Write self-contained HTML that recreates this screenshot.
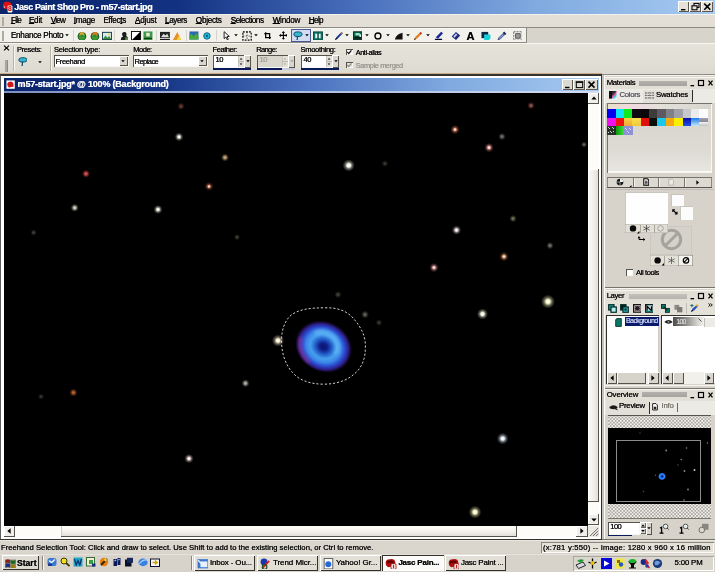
<!DOCTYPE html>
<html lang="en">
<head>
<meta charset="utf-8">
<title>Jasc Paint Shop Pro - m57-start.jpg</title>
<style>
html,body{margin:0;padding:0;}
body{width:715px;height:572px;overflow:hidden;background:#d9d6ce;font-family:"Liberation Sans",sans-serif;}
#app{position:relative;width:715px;height:572px;overflow:hidden;will-change:transform;transform:translateZ(0);}
#app div,#app span.t,#app svg{position:absolute;box-sizing:border-box;}
#app span.t{white-space:nowrap;display:block;-webkit-text-stroke:0.15px currentColor;}
#app u{text-decoration-thickness:0.8px;text-underline-offset:0.2px;}
</style>
</head>
<body>
<div id="app">
<div style="left:0px;top:0px;width:715px;height:13.6px;background:linear-gradient(90deg,#0a246a 0%,#133282 25%,#486fbc 50%,#80aae0 75%,#a6caf0 100%);"></div>
<svg style="left:2px;top:1px" width="12" height="12" viewBox="0 0 12 12"><path d="M1 4.5 Q1 1 4.5 0.8 Q9 0.2 9.6 3.6 L9.6 7 L3 8 Q1 7.4 1 4.5Z" fill="#e01010"/><circle cx="2.4" cy="6" r="0.8" fill="#f8d0e0"/><rect x="5.6" y="4.6" width="4.8" height="6.8" rx="1" fill="#fff"/></svg>
<span class="t" style="left:8.1px;top:4.63px;font-size:6.72px;line-height:8.74px;height:8.74px;color:#d02828;font-weight:bold;text-shadow:0 0 0.5px rgba(208,40,40,0.5);">8</span>
<span class="t" style="left:14.3px;top:1.73px;font-size:9.03px;line-height:11.74px;height:11.74px;color:#fff;font-weight:bold;text-shadow:0 0 0.5px rgba(255,255,255,0.5);letter-spacing:-0.395px;">Jasc Paint Shop Pro - m57-start.jpg</span>
<div style="left:678px;top:1px;width:10.8px;height:11px;background:#e6e2da;box-shadow:inset 1px 1px 0 #ffffff, inset -1px -1px 0 #5a5850;"></div>
<div style="left:689.2px;top:1px;width:11.6px;height:11px;background:#e6e2da;box-shadow:inset 1px 1px 0 #ffffff, inset -1px -1px 0 #5a5850;"></div>
<div style="left:701.3px;top:1px;width:11.8px;height:11px;background:#e6e2da;box-shadow:inset 1px 1px 0 #ffffff, inset -1px -1px 0 #5a5850;"></div>
<svg style="left:678px;top:1px" width="36" height="11" viewBox="0 0 36 11"><rect x="3" y="8" width="4.4" height="1.4" fill="#000"/><rect x="16" y="2.4" width="5" height="4" fill="none" stroke="#000" stroke-width="1.1"/><rect x="14" y="4.8" width="5" height="4" fill="#e6e2da" stroke="#000" stroke-width="1.1"/><path d="M26.3 2.6 L32.3 8.8 M32.3 2.6 L26.3 8.8" stroke="#000" stroke-width="1.6"/></svg>
<div style="left:0px;top:13.6px;width:715px;height:14.4px;background:#e3dfd7;"></div>
<div style="left:0px;top:13.6px;width:715px;height:1.2px;background:#f4f2ec;"></div>
<div style="left:0px;top:27px;width:715px;height:1px;background:#8e8b84;"></div>
<div style="left:1.5px;top:16.5px;width:2px;height:9.5px;background:#aeaba3;"></div>
<span class="t" style="left:10.9px;top:15.98px;font-size:8.19px;line-height:10.65px;height:10.65px;color:#000;text-shadow:0 0 0.5px rgba(0,0,0,0.5);letter-spacing:-0.772px;"><u>F</u>ile</span>
<span class="t" style="left:28.9px;top:15.98px;font-size:8.19px;line-height:10.65px;height:10.65px;color:#000;text-shadow:0 0 0.5px rgba(0,0,0,0.5);letter-spacing:-0.248px;"><u>E</u>dit</span>
<span class="t" style="left:50.8px;top:15.98px;font-size:8.19px;line-height:10.65px;height:10.65px;color:#000;text-shadow:0 0 0.5px rgba(0,0,0,0.5);letter-spacing:-0.845px;"><u>V</u>iew</span>
<span class="t" style="left:73.8px;top:15.98px;font-size:8.19px;line-height:10.65px;height:10.65px;color:#000;text-shadow:0 0 0.5px rgba(0,0,0,0.5);letter-spacing:-0.307px;"><u>I</u>mage</span>
<span class="t" style="left:103.5px;top:15.98px;font-size:8.19px;line-height:10.65px;height:10.65px;color:#000;text-shadow:0 0 0.5px rgba(0,0,0,0.5);letter-spacing:-0.337px;">Effec<u>t</u>s</span>
<span class="t" style="left:135px;top:15.98px;font-size:8.19px;line-height:10.65px;height:10.65px;color:#000;text-shadow:0 0 0.5px rgba(0,0,0,0.5);letter-spacing:-0.186px;"><u>A</u>djust</span>
<span class="t" style="left:165px;top:15.98px;font-size:8.19px;line-height:10.65px;height:10.65px;color:#000;text-shadow:0 0 0.5px rgba(0,0,0,0.5);letter-spacing:-0.422px;"><u>L</u>ayers</span>
<span class="t" style="left:195.8px;top:15.98px;font-size:8.19px;line-height:10.65px;height:10.65px;color:#000;text-shadow:0 0 0.5px rgba(0,0,0,0.5);letter-spacing:-0.288px;"><u>O</u>bjects</span>
<span class="t" style="left:230.7px;top:15.98px;font-size:8.19px;line-height:10.65px;height:10.65px;color:#000;text-shadow:0 0 0.5px rgba(0,0,0,0.5);letter-spacing:-0.492px;"><u>S</u>elections</span>
<span class="t" style="left:272.7px;top:15.98px;font-size:8.19px;line-height:10.65px;height:10.65px;color:#000;text-shadow:0 0 0.5px rgba(0,0,0,0.5);letter-spacing:-0.296px;"><u>W</u>indow</span>
<span class="t" style="left:308.8px;top:15.98px;font-size:8.19px;line-height:10.65px;height:10.65px;color:#000;text-shadow:0 0 0.5px rgba(0,0,0,0.5);letter-spacing:-0.653px;"><u>H</u>elp</span>
<div style="left:0px;top:28px;width:715px;height:15px;background:#d7d4cc;"></div>
<div style="left:0px;top:28px;width:526px;height:15px;background:#f3f1ec;"></div>
<div style="left:0px;top:28px;width:527px;height:1px;background:#f8f6f0;"></div>
<div style="left:0px;top:42px;width:527px;height:1px;background:#8e8b84;"></div>
<div style="left:527px;top:42.5px;width:188px;height:1px;background:#fbfaf6;"></div>
<div style="left:525.5px;top:28px;width:1px;height:15px;background:#8e8b84;"></div>
<div style="left:1.5px;top:31px;width:2px;height:9.5px;background:#aeaba3;"></div>
<span class="t" style="left:10.9px;top:30.68px;font-size:8.19px;line-height:10.65px;height:10.65px;color:#000;text-shadow:0 0 0.5px rgba(0,0,0,0.5);letter-spacing:-0.261px;">Enhance Photo</span>
<svg style="left:65px;top:34.199999999999996px" width="4" height="2.4" viewBox="0 0 5 3"><path d="M0.3 0.2 L4.7 0.2 L2.5 2.8Z" fill="#000"/></svg>
<div style="left:72.5px;top:30px;width:1px;height:11px;background:#d6d3cc;"></div>
<div style="left:114px;top:30px;width:1px;height:11px;background:#d6d3cc;"></div>
<div style="left:155.5px;top:30px;width:1px;height:11px;background:#d6d3cc;"></div>
<div style="left:185.5px;top:30px;width:1px;height:11px;background:#d6d3cc;"></div>
<div style="left:215.5px;top:30px;width:1px;height:11px;background:#d6d3cc;"></div>
<svg style="left:77.05px;top:30.55px" width="9.9" height="9.9" viewBox="0 0 11 11"><circle cx="5.5" cy="6" r="4.8" fill="#1c5c1c"/><circle cx="5.5" cy="6.4" r="3.6" fill="#3a9a34"/><ellipse cx="5.5" cy="3.6" rx="2.6" ry="2.4" fill="#e8a838"/><ellipse cx="5.5" cy="5.2" rx="2" ry="1.4" fill="#2e8a2e"/></svg>
<svg style="left:90.05px;top:30.55px" width="9.9" height="9.9" viewBox="0 0 11 11"><circle cx="5.5" cy="6" r="4.8" fill="#1c5c1c"/><circle cx="5.5" cy="6.4" r="3.6" fill="#3a9a34"/><ellipse cx="5.5" cy="3.6" rx="2.8" ry="2.5" fill="#e87828"/><ellipse cx="5.5" cy="5.4" rx="2" ry="1.4" fill="#2e8a2e"/></svg>
<svg style="left:102.05px;top:30.55px" width="9.9" height="9.9" viewBox="0 0 11 11"><rect x="0.5" y="1.5" width="10" height="8" fill="#d8ecf0" stroke="#1a3c44" stroke-width="1.1"/><path d="M1 9 L4 5 L6 7.5 L8 5.5 L10 9Z" fill="#3a8a3a"/><circle cx="7.5" cy="3.8" r="1.1" fill="#e8d850"/></svg>
<svg style="left:119.05px;top:30.55px" width="9.9" height="9.9" viewBox="0 0 11 11"><path d="M2 10.5 Q2 6.5 4.5 6 Q3 4.5 3.5 2.5 Q5 0.3 7.5 1.5 Q9 3 8 5.5 L10 7 L10 10.5Z" fill="#1c1c1c"/><rect x="7" y="7" width="3" height="3.5" fill="#5a8a4a"/></svg>
<svg style="left:131.05px;top:30.55px" width="9.9" height="9.9" viewBox="0 0 11 11"><rect x="0.5" y="0.5" width="10" height="10" fill="#fff" stroke="#000" stroke-width="1"/><path d="M0.5 10.5 L10.5 0.5 L10.5 10.5Z" fill="#000"/></svg>
<svg style="left:143.05px;top:30.55px" width="9.9" height="9.9" viewBox="0 0 11 11"><rect x="0.5" y="0.5" width="10" height="10" fill="#3a9a4a"/><rect x="3.5" y="2" width="4" height="4" fill="#e8e8d0"/><rect x="1" y="7.5" width="9" height="1.5" fill="#1a3a1a"/></svg>
<svg style="left:160.05px;top:30.55px" width="9.9" height="9.9" viewBox="0 0 11 11"><rect x="0" y="1" width="11" height="7" fill="#222"/><path d="M1 7 L4 3 L6 5 L8 3 L10 7Z" fill="#ddd"/><rect x="0" y="9" width="11" height="1.5" fill="#000"/></svg>
<svg style="left:172.05px;top:30.55px" width="9.9" height="9.9" viewBox="0 0 11 11"><path d="M1 10 L6 1 L10 10Z" fill="#e89020"/><path d="M5 10 L8 5 L10.5 10Z" fill="#f0d840"/><path d="M0.5 10.5 L10.5 10.5" stroke="#6a8ad0" stroke-width="1"/></svg>
<svg style="left:189.05px;top:30.55px" width="9.9" height="9.9" viewBox="0 0 11 11"><rect x="0.5" y="0.5" width="10" height="9" fill="#2a6ab0"/><path d="M0.5 9.5 L0.5 5 L3 3 L5 6 L8 2.5 L10.5 5.5 L10.5 9.5Z" fill="#4aa840"/></svg>
<svg style="left:202.05px;top:31.05px" width="9.9" height="9.9" viewBox="0 0 11 11"><circle cx="5.5" cy="5.5" r="3.6" fill="#20b8d8" stroke="#0a5a7a" stroke-width="1"/><circle cx="5.5" cy="5.5" r="1.2" fill="#0a5a7a"/></svg>
<svg style="left:222.12px;top:31.12px" width="9.35" height="9.35" viewBox="0 0 11 11"><path d="M2.5 0.8 L2.5 9 L4.6 7 L6.2 10.4 L7.4 9.8 L5.9 6.6 L8.6 6.4Z" fill="#fff" stroke="#000" stroke-width="1"/></svg>
<svg style="left:233.5px;top:34.199999999999996px" width="4" height="2.4" viewBox="0 0 5 3"><path d="M0.3 0.2 L4.7 0.2 L2.5 2.8Z" fill="#000"/></svg>
<svg style="left:241.74px;top:30.94px" width="10.12" height="10.12" viewBox="0 0 11 11"><rect x="1" y="1" width="9" height="9" fill="none" stroke="#000" stroke-width="1.3" stroke-dasharray="2 1.3"/><path d="M5.5 1 V10" stroke="#000" stroke-width="0.8" stroke-dasharray="1.5 1.5"/><path d="M1 5.5 H10" stroke="#000" stroke-width="0.6" stroke-dasharray="1.5 1.5"/></svg>
<svg style="left:253.5px;top:34.199999999999996px" width="4" height="2.4" viewBox="0 0 5 3"><path d="M0.3 0.2 L4.7 0.2 L2.5 2.8Z" fill="#000"/></svg>
<svg style="left:264.17px;top:32.07px" width="7.26" height="7.26" viewBox="0 0 11 11"><path d="M2.5 0.5 V8.5 H10.5 M0.5 2.5 H8.5 V10.5" fill="none" stroke="#000" stroke-width="1.9"/></svg>
<svg style="left:278.6px;top:31.3px" width="8.8" height="8.8" viewBox="0 0 11 11"><path d="M5.5 0 L7.5 2.4 H6.2 V4.8 H8.6 V3.5 L11 5.5 L8.6 7.5 V6.2 H6.2 V8.6 H7.5 L5.5 11 L3.5 8.6 H4.8 V6.2 H2.4 V7.5 L0 5.5 L2.4 3.5 V4.8 H4.8 V2.4 H3.5Z" fill="#000"/></svg>
<div style="left:291px;top:29px;width:19.8px;height:12.6px;background:#d3dcf0;border:1px solid #4a5a98;"></div>
<svg style="left:293.05px;top:30.55px" width="9.9" height="9.9" viewBox="0 0 11 11"><ellipse cx="5.5" cy="3.6" rx="4.6" ry="2.6" fill="#38b8d0" stroke="#0a4a6a" stroke-width="1.1"/><path d="M4.5 6 Q5.5 8 4.2 10.5" fill="none" stroke="#0a4a6a" stroke-width="1.3"/></svg>
<svg style="left:305px;top:34.199999999999996px" width="4" height="2.4" viewBox="0 0 5 3"><path d="M0.3 0.2 L4.7 0.2 L2.5 2.8Z" fill="#000"/></svg>
<svg style="left:313.25px;top:30.55px" width="9.9" height="9.9" viewBox="0 0 11 11"><rect x="0.5" y="1" width="10" height="9" fill="#0a7a6c" stroke="#04443c" stroke-width="1"/><rect x="2.5" y="3" width="6" height="5" fill="#e8f4f0"/><rect x="4.8" y="2" width="1.6" height="7" fill="#04443c"/></svg>
<svg style="left:324.8px;top:34.199999999999996px" width="4" height="2.4" viewBox="0 0 5 3"><path d="M0.3 0.2 L4.7 0.2 L2.5 2.8Z" fill="#000"/></svg>
<svg style="left:333.55px;top:30.55px" width="9.9" height="9.9" viewBox="0 0 11 11"><path d="M1 10 L3 6.5 L8.5 1 L10 2.5 L4.5 8Z" fill="#1a3a9a"/><path d="M1 10 L2.4 7.4 L3.8 8.8Z" fill="#000"/><path d="M7.2 2.3 L8.5 1 L10 2.5 L8.7 3.8Z" fill="#e07828"/></svg>
<svg style="left:345px;top:34.199999999999996px" width="4" height="2.4" viewBox="0 0 5 3"><path d="M0.3 0.2 L4.7 0.2 L2.5 2.8Z" fill="#000"/></svg>
<svg style="left:353.18px;top:31.08px" width="9.24" height="9.24" viewBox="0 0 11 11"><rect x="0.5" y="1" width="10" height="9" fill="#087a5c" stroke="#04241c" stroke-width="1.2"/><rect x="3" y="2.5" width="5" height="2.6" fill="#a8e8c8"/><rect x="1.5" y="6.6" width="8" height="2.6" fill="#021410"/><rect x="7.6" y="4" width="2" height="3" fill="#e8f4f0"/></svg>
<svg style="left:365px;top:34.199999999999996px" width="4" height="2.4" viewBox="0 0 5 3"><path d="M0.3 0.2 L4.7 0.2 L2.5 2.8Z" fill="#000"/></svg>
<svg style="left:373.05px;top:30.55px" width="9.9" height="9.9" viewBox="0 0 11 11"><circle cx="5.5" cy="5.5" r="3.3" fill="none" stroke="#000" stroke-width="1.5"/></svg>
<svg style="left:385.5px;top:34.199999999999996px" width="4" height="2.4" viewBox="0 0 5 3"><path d="M0.3 0.2 L4.7 0.2 L2.5 2.8Z" fill="#000"/></svg>
<svg style="left:394.05px;top:30.55px" width="9.9" height="9.9" viewBox="0 0 11 11"><path d="M1 9.5 Q2 4 9.5 2 L9.5 9.5Z" fill="#111"/></svg>
<svg style="left:405.5px;top:34.199999999999996px" width="4" height="2.4" viewBox="0 0 5 3"><path d="M0.3 0.2 L4.7 0.2 L2.5 2.8Z" fill="#000"/></svg>
<svg style="left:413.05px;top:30.55px" width="9.9" height="9.9" viewBox="0 0 11 11"><path d="M1 10 L3 6 L8.5 1 L10 2.5 L5 8Z" fill="#e08020"/><path d="M1 10 L2 7.8 L3.4 9.2Z" fill="#402000"/><path d="M7 2.5 L8.5 1 L10 2.5 L8.6 4Z" fill="#c03030"/></svg>
<svg style="left:425.5px;top:34.199999999999996px" width="4" height="2.4" viewBox="0 0 5 3"><path d="M0.3 0.2 L4.7 0.2 L2.5 2.8Z" fill="#000"/></svg>
<svg style="left:433.55px;top:30.55px" width="9.9" height="9.9" viewBox="0 0 11 11"><path d="M2 7 L8 0.8 L10 2.6 L4.5 8.5Z" fill="#1a2a9a"/><rect x="1" y="8.6" width="8" height="1.8" fill="#0a0a3a"/></svg>
<svg style="left:451.35px;top:30.55px" width="9.9" height="9.9" viewBox="0 0 11 11"><path d="M0.8 6 L5.5 1 L10.2 5 L5.6 10Z" fill="#1a2a7a"/><path d="M2.5 6 L5.5 2.8 L7 4.2 L4 7.4Z" fill="#c8d0f0"/></svg>
<span class="t" style="left:466.6px;top:28.66px;font-size:11.13px;line-height:14.47px;height:14.47px;color:#000;font-weight:bold;text-shadow:0 0 0.5px rgba(0,0,0,0.5);">A</span>
<svg style="left:481.05px;top:30.55px" width="9.9" height="9.9" viewBox="0 0 11 11"><rect x="0.5" y="1" width="7.5" height="7" fill="#0a2a4a"/><path d="M3.5 4 H10.5 V8 L8.5 10.5 H3.5Z" fill="#18d0d8"/></svg>
<svg style="left:497.05px;top:30.55px" width="9.9" height="9.9" viewBox="0 0 11 11"><path d="M1 10 L2 7.5 L6.5 3 L8 4.5 L3.5 9Z" fill="#7a9ad8" stroke="#1a2a5a" stroke-width="0.7"/><path d="M6.3 2.2 L8 0.6 L10.4 3 L8.8 4.7Z" fill="#1a2a5a"/></svg>
<svg style="left:512.55px;top:30.55px" width="9.9" height="9.9" viewBox="0 0 11 11"><rect x="0.8" y="0.8" width="9.4" height="9.4" fill="none" stroke="#555" stroke-width="0.9" stroke-dasharray="2.2 1"/><rect x="3" y="3" width="5" height="5" fill="#999" stroke="#333" stroke-width="0.8"/></svg>
<div style="left:0px;top:43px;width:715px;height:31px;background:#e4e1d9;background:linear-gradient(180deg,#e6e3db 0%,#e1ded6 60%,#dcd9d1 100%);"></div>
<div style="left:0px;top:43px;width:715px;height:1px;background:#f8f6f0;"></div>
<div style="left:0px;top:72.7px;width:602px;height:1px;background:#c9ab8c;"></div>
<div style="left:0px;top:73.7px;width:602px;height:2px;background:#36322e;"></div>
<div style="left:602px;top:73.7px;width:113px;height:1px;background:#8e8b84;"></div>
<div style="left:602px;top:74.7px;width:113px;height:1px;background:#f4f2ec;"></div>
<div style="left:0px;top:75.7px;width:602px;height:1px;background:#f8f6f2;"></div>
<svg style="left:3px;top:44.5px" width="7" height="6" viewBox="0 0 7 6"><path d="M1 0.6 L6 5.4 M6 0.6 L1 5.4" stroke="#000" stroke-width="1.2"/></svg>
<div style="left:4px;top:59.5px;width:4.2px;height:12.5px;background:#aba8a0;box-shadow:inset 1px 0 0 #d8d5cd,inset -1px 0 0 #8d8a82;"></div>
<div style="left:13px;top:46px;width:1px;height:25px;background:#b5b2aa;"></div>
<div style="left:14px;top:46px;width:1px;height:25px;background:#f8f6f0;"></div>
<div style="left:50px;top:46px;width:1px;height:25px;background:#b5b2aa;"></div>
<div style="left:51px;top:46px;width:1px;height:25px;background:#f8f6f0;"></div>
<span class="t" style="left:17px;top:44.69px;font-size:7.56px;line-height:9.83px;height:9.83px;color:#000;text-shadow:0 0 0.5px rgba(0,0,0,0.5);letter-spacing:-0.398px;">Presets:</span>
<svg style="left:17.55px;top:56.55px" width="9.9" height="9.9" viewBox="0 0 11 11"><ellipse cx="5.5" cy="3.2" rx="4.6" ry="2.4" fill="#38b8d0" stroke="#0a4a6a" stroke-width="1.1"/><path d="M4.5 5.4 Q5.5 7.5 4.2 10.5" fill="none" stroke="#0a4a6a" stroke-width="1.3"/></svg>
<svg style="left:37.5px;top:60.8px" width="4" height="2.4" viewBox="0 0 5 3"><path d="M0.3 0.2 L4.7 0.2 L2.5 2.8Z" fill="#000"/></svg>
<span class="t" style="left:54px;top:44.69px;font-size:7.56px;line-height:9.83px;height:9.83px;color:#000;text-shadow:0 0 0.5px rgba(0,0,0,0.5);letter-spacing:-0.234px;">Selection type:</span>
<span class="t" style="left:133.2px;top:44.69px;font-size:7.56px;line-height:9.83px;height:9.83px;color:#000;text-shadow:0 0 0.5px rgba(0,0,0,0.5);letter-spacing:-0.497px;">Mode:</span>
<span class="t" style="left:212.5px;top:44.69px;font-size:7.56px;line-height:9.83px;height:9.83px;color:#000;text-shadow:0 0 0.5px rgba(0,0,0,0.5);letter-spacing:-0.451px;">Feather:</span>
<span class="t" style="left:256.2px;top:44.69px;font-size:7.56px;line-height:9.83px;height:9.83px;color:#000;text-shadow:0 0 0.5px rgba(0,0,0,0.5);letter-spacing:-0.641px;">Range:</span>
<span class="t" style="left:300.5px;top:44.69px;font-size:7.56px;line-height:9.83px;height:9.83px;color:#000;text-shadow:0 0 0.5px rgba(0,0,0,0.5);letter-spacing:-0.319px;">Smoothing:</span>
<div style="left:54px;top:55px;width:75px;height:12px;background:#fff;box-shadow:inset 1px 1px 0 #55534c, inset -1px -1px 0 #f8f6f0;"></div>
<div style="left:118.5px;top:56px;width:9.5px;height:10px;background:#d9d6ce;box-shadow:inset 1px 1px 0 #fff, inset -1px -1px 0 #55534c;"></div>
<svg style="left:121.2px;top:60.099999999999994px" width="4" height="2.4" viewBox="0 0 5 3"><path d="M0.3 0.2 L4.7 0.2 L2.5 2.8Z" fill="#000"/></svg>
<span class="t" style="left:55.6px;top:56.88px;font-size:7.56px;line-height:9.83px;height:9.83px;color:#000;text-shadow:0 0 0.5px rgba(0,0,0,0.5);letter-spacing:-0.377px;">Freehand</span>
<div style="left:133px;top:55px;width:75px;height:12px;background:#fff;box-shadow:inset 1px 1px 0 #55534c, inset -1px -1px 0 #f8f6f0;"></div>
<div style="left:197.5px;top:56px;width:9.5px;height:10px;background:#d9d6ce;box-shadow:inset 1px 1px 0 #fff, inset -1px -1px 0 #55534c;"></div>
<svg style="left:200.2px;top:60.099999999999994px" width="4" height="2.4" viewBox="0 0 5 3"><path d="M0.3 0.2 L4.7 0.2 L2.5 2.8Z" fill="#000"/></svg>
<span class="t" style="left:134.6px;top:56.88px;font-size:7.56px;line-height:9.83px;height:9.83px;color:#000;text-shadow:0 0 0.5px rgba(0,0,0,0.5);letter-spacing:-0.586px;">Replace</span>
<div style="left:213px;top:54.5px;width:31px;height:13px;background:#fff;box-shadow:inset 1px 1px 0 #55534c, inset -1px -1px 0 #f8f6f0;"></div>
<span class="t" style="left:215.5px;top:55.09px;font-size:7.56px;line-height:9.83px;height:9.83px;color:#000;text-shadow:0 0 0.5px rgba(0,0,0,0.5);letter-spacing:-0.403px;">10</span>
<div style="left:237.5px;top:55.5px;width:6px;height:11px;background:#e4e1d9;box-shadow:inset 1px 0 0 #c8c5be;"></div>
<div style="left:237.5px;top:61.0px;width:6px;height:1px;background:#b8b5ae;"></div>
<svg style="left:238.7px;top:56.7px" width="4" height="9" viewBox="0 0 4 9"><path d="M0.6 2.6 L3.4 2.6 L2 1Z M0.6 6.4 L3.4 6.4 L2 8Z" fill="#000"/></svg>
<div style="left:244px;top:54.5px;width:7px;height:13px;background:#d9d6ce;box-shadow:inset 1px 1px 0 #fff, inset -1px -1px 0 #55534c;"></div>
<svg style="left:245.6px;top:60.099999999999994px" width="4" height="2.4" viewBox="0 0 5 3"><path d="M0.3 0.2 L4.7 0.2 L2.5 2.8Z" fill="#000"/></svg>
<div style="left:213px;top:67.5px;width:38px;height:2px;background:#0a1a5a;"></div>
<div style="left:257px;top:54.5px;width:31px;height:13px;background:#d9d6ce;box-shadow:inset 1px 1px 0 #55534c, inset -1px -1px 0 #f8f6f0;"></div>
<span class="t" style="left:259.5px;top:55.09px;font-size:7.56px;line-height:9.83px;height:9.83px;color:#a5a29a;text-shadow:0 0 0.5px rgba(165,162,154,0.5);letter-spacing:-0.403px;">10</span>
<div style="left:281.5px;top:55.5px;width:6px;height:11px;background:#e4e1d9;box-shadow:inset 1px 0 0 #c8c5be;"></div>
<div style="left:281.5px;top:61.0px;width:6px;height:1px;background:#b8b5ae;"></div>
<svg style="left:282.7px;top:56.7px" width="4" height="9" viewBox="0 0 4 9"><path d="M0.6 2.6 L3.4 2.6 L2 1Z M0.6 6.4 L3.4 6.4 L2 8Z" fill="#a5a29a"/></svg>
<div style="left:288px;top:54.5px;width:7px;height:13px;background:#d9d6ce;box-shadow:inset 1px 1px 0 #fff, inset -1px -1px 0 #55534c;"></div>
<svg style="left:289.6px;top:60.099999999999994px" width="4" height="2.4" viewBox="0 0 5 3"><path d="M0.3 0.2 L4.7 0.2 L2.5 2.8Z" fill="#a5a29a"/></svg>
<div style="left:257px;top:67.5px;width:25px;height:2px;background:#0a1a5a;"></div>
<div style="left:282px;top:67.5px;width:13px;height:2px;background:#c8ccd8;"></div>
<div style="left:301px;top:54.5px;width:31px;height:13px;background:#fff;box-shadow:inset 1px 1px 0 #55534c, inset -1px -1px 0 #f8f6f0;"></div>
<span class="t" style="left:303.5px;top:55.09px;font-size:7.56px;line-height:9.83px;height:9.83px;color:#000;text-shadow:0 0 0.5px rgba(0,0,0,0.5);letter-spacing:-0.403px;">40</span>
<div style="left:325.5px;top:55.5px;width:6px;height:11px;background:#e4e1d9;box-shadow:inset 1px 0 0 #c8c5be;"></div>
<div style="left:325.5px;top:61.0px;width:6px;height:1px;background:#b8b5ae;"></div>
<svg style="left:326.7px;top:56.7px" width="4" height="9" viewBox="0 0 4 9"><path d="M0.6 2.6 L3.4 2.6 L2 1Z M0.6 6.4 L3.4 6.4 L2 8Z" fill="#000"/></svg>
<div style="left:332px;top:54.5px;width:7px;height:13px;background:#d9d6ce;box-shadow:inset 1px 1px 0 #fff, inset -1px -1px 0 #55534c;"></div>
<svg style="left:333.6px;top:60.099999999999994px" width="4" height="2.4" viewBox="0 0 5 3"><path d="M0.3 0.2 L4.7 0.2 L2.5 2.8Z" fill="#000"/></svg>
<div style="left:301px;top:67.5px;width:38px;height:2px;background:#0a1a5a;"></div>
<div style="left:346px;top:48.5px;width:6.5px;height:6.5px;background:#fff;box-shadow:inset 1px 1px 0 #55534c, inset -1px -1px 0 #f8f6f0;"></div>
<svg style="left:346px;top:48.5px" width="6.5" height="6.5" viewBox="0 0 7 7"><path d="M1.4 3.2 L3 5 L5.8 1.6" fill="none" stroke="#000" stroke-width="1.3"/></svg>
<div style="left:346px;top:61.5px;width:6.5px;height:6.5px;background:#e4e1d9;box-shadow:inset 1px 1px 0 #55534c, inset -1px -1px 0 #f8f6f0;"></div>
<svg style="left:346px;top:61.5px" width="6.5" height="6.5" viewBox="0 0 7 7"><path d="M1.4 3.2 L3 5 L5.8 1.6" fill="none" stroke="#8a877f" stroke-width="1.3"/></svg>
<span class="t" style="left:355.8px;top:47.52px;font-size:7.35px;line-height:9.55px;height:9.55px;color:#000;text-shadow:0 0 0.5px rgba(0,0,0,0.5);letter-spacing:-0.472px;">Anti-alias</span>
<span class="t" style="left:355.8px;top:60.52px;font-size:7.35px;line-height:9.55px;height:9.55px;color:#9a978f;text-shadow:0 0 0.5px rgba(154,151,143,0.5);letter-spacing:-0.373px;">Sample merged</span>
<div style="left:0px;top:76px;width:715px;height:464px;background:#d6d1c9;"></div>
<div style="left:0px;top:75.7px;width:601px;height:463.6px;background:#ffffff;"></div>
<div style="left:0px;top:75px;width:1px;height:465px;background:#5e5e5e;"></div>
<div style="left:601px;top:75px;width:1px;height:465px;background:#33312c;"></div>
<div style="left:602px;top:75px;width:2px;height:465px;background:#c4c1ba;"></div>
<div style="left:604px;top:75px;width:1px;height:465px;background:#fbfaf6;"></div>
<div style="left:3.5px;top:78px;width:595.5px;height:12.6px;background:linear-gradient(90deg,#0a246a 0%,#133282 25%,#486fbc 50%,#80aae0 75%,#a6caf0 100%);"></div>
<div style="left:3.5px;top:90.5px;width:595.5px;height:2.3px;background:linear-gradient(90deg,#7f8fc0 0%,#a9b6dc 40%,#d4dcf2 100%);"></div>
<svg style="left:6px;top:80.3px" width="9.2" height="9.2" viewBox="0 0 11 11"><rect x="0.5" y="0.5" width="10" height="10" fill="#fff"/><path d="M1.5 5.5 Q1.5 2 5 2 Q8.5 1.5 9 5 L9 8 L3.5 9 Q1.5 8 1.5 5.5Z" fill="#d01818"/></svg>
<span class="t" style="left:17.6px;top:79.33px;font-size:9.03px;line-height:11.74px;height:11.74px;color:#fff;font-weight:bold;text-shadow:0 0 0.5px rgba(255,255,255,0.5);letter-spacing:-0.209px;">m57-start.jpg* @ 100% (Background)</span>
<div style="left:561.8px;top:79px;width:11px;height:11px;background:#dcd9d1;box-shadow:inset 1px 1px 0 #ffffff, inset -1px -1px 0 #5a5850;"></div>
<div style="left:573.3px;top:79px;width:11.5px;height:11px;background:#dcd9d1;box-shadow:inset 1px 1px 0 #ffffff, inset -1px -1px 0 #5a5850;"></div>
<div style="left:585.3px;top:79px;width:12.5px;height:11px;background:#dcd9d1;box-shadow:inset 1px 1px 0 #ffffff, inset -1px -1px 0 #5a5850;"></div>
<svg style="left:561.8px;top:79px" width="36" height="11" viewBox="0 0 36 11"><rect x="3" y="7.8" width="4.5" height="1.4" fill="#000"/><rect x="14.3" y="3" width="6.4" height="5.6" fill="none" stroke="#000" stroke-width="1"/><rect x="13.8" y="2.4" width="7.4" height="1.4" fill="#000"/><path d="M26.5 2.6 L32.5 8.6 M32.5 2.6 L26.5 8.6" stroke="#000" stroke-width="1.5"/></svg>
<div style="left:3.8px;top:92.7px;width:583.8px;height:432.9px;background:#000;"></div>
<svg style="left:0;top:0" width="715" height="572" viewBox="0 0 715 572"><defs><filter id="bl" x="-50%" y="-50%" width="200%" height="200%"><feGaussianBlur stdDeviation="1.6"/></filter><radialGradient id="neb" cx="0.5" cy="0.52" r="0.5"><stop offset="0" stop-color="#0a1270"/><stop offset="0.14" stop-color="#10208c"/><stop offset="0.3" stop-color="#2462cc"/><stop offset="0.46" stop-color="#46a0ee"/><stop offset="0.6" stop-color="#3c88e8"/><stop offset="0.74" stop-color="#2a4cd0"/><stop offset="0.87" stop-color="#3424a0" stop-opacity="0.85"/><stop offset="1" stop-color="#300c50" stop-opacity="0"/></radialGradient><radialGradient id="s0"><stop offset="0" stop-color="#38382f"/><stop offset="0.3" stop-color="#38382f" stop-opacity="0.9"/><stop offset="0.6" stop-color="#38382f" stop-opacity="0.35"/><stop offset="1" stop-color="#38382f" stop-opacity="0"/></radialGradient><radialGradient id="s1"><stop offset="0" stop-color="#383830"/><stop offset="0.3" stop-color="#383830" stop-opacity="0.9"/><stop offset="0.6" stop-color="#383830" stop-opacity="0.35"/><stop offset="1" stop-color="#383830" stop-opacity="0"/></radialGradient><radialGradient id="s2"><stop offset="0" stop-color="#404038"/><stop offset="0.3" stop-color="#404038" stop-opacity="0.9"/><stop offset="0.6" stop-color="#404038" stop-opacity="0.35"/><stop offset="1" stop-color="#404038" stop-opacity="0"/></radialGradient><radialGradient id="s3"><stop offset="0" stop-color="#40403a"/><stop offset="0.3" stop-color="#40403a" stop-opacity="0.9"/><stop offset="0.6" stop-color="#40403a" stop-opacity="0.35"/><stop offset="1" stop-color="#40403a" stop-opacity="0"/></radialGradient><radialGradient id="s4"><stop offset="0" stop-color="#606058"/><stop offset="0.3" stop-color="#606058" stop-opacity="0.9"/><stop offset="0.6" stop-color="#606058" stop-opacity="0.35"/><stop offset="1" stop-color="#606058" stop-opacity="0"/></radialGradient><radialGradient id="s5"><stop offset="0" stop-color="#6a3a34"/><stop offset="0.3" stop-color="#6a3a34" stop-opacity="0.9"/><stop offset="0.6" stop-color="#6a3a34" stop-opacity="0.35"/><stop offset="1" stop-color="#6a3a34" stop-opacity="0"/></radialGradient><radialGradient id="s6"><stop offset="0" stop-color="#707058"/><stop offset="0.3" stop-color="#707058" stop-opacity="0.9"/><stop offset="0.6" stop-color="#707058" stop-opacity="0.35"/><stop offset="1" stop-color="#707058" stop-opacity="0"/></radialGradient><radialGradient id="s7"><stop offset="0" stop-color="#707068"/><stop offset="0.3" stop-color="#707068" stop-opacity="0.9"/><stop offset="0.6" stop-color="#707068" stop-opacity="0.35"/><stop offset="1" stop-color="#707068" stop-opacity="0"/></radialGradient><radialGradient id="s8"><stop offset="0" stop-color="#905048"/><stop offset="0.3" stop-color="#905048" stop-opacity="0.9"/><stop offset="0.6" stop-color="#905048" stop-opacity="0.35"/><stop offset="1" stop-color="#905048" stop-opacity="0"/></radialGradient><radialGradient id="s9"><stop offset="0" stop-color="#b0b0a8"/><stop offset="0.3" stop-color="#b0b0a8" stop-opacity="0.9"/><stop offset="0.6" stop-color="#b0b0a8" stop-opacity="0.35"/><stop offset="1" stop-color="#b0b0a8" stop-opacity="0"/></radialGradient><radialGradient id="s10"><stop offset="0" stop-color="#c06030"/><stop offset="0.3" stop-color="#c06030" stop-opacity="0.9"/><stop offset="0.6" stop-color="#c06030" stop-opacity="0.35"/><stop offset="1" stop-color="#c06030" stop-opacity="0"/></radialGradient><radialGradient id="s11"><stop offset="0" stop-color="#c06040"/><stop offset="0.3" stop-color="#c06040" stop-opacity="0.9"/><stop offset="0.6" stop-color="#c06040" stop-opacity="0.35"/><stop offset="1" stop-color="#c06040" stop-opacity="0"/></radialGradient><radialGradient id="s12"><stop offset="0" stop-color="#c8a878"/><stop offset="0.3" stop-color="#c8a878" stop-opacity="0.9"/><stop offset="0.6" stop-color="#c8a878" stop-opacity="0.35"/><stop offset="1" stop-color="#c8a878" stop-opacity="0"/></radialGradient><radialGradient id="s13"><stop offset="0" stop-color="#d8d8c8"/><stop offset="0.3" stop-color="#d8d8c8" stop-opacity="0.9"/><stop offset="0.6" stop-color="#d8d8c8" stop-opacity="0.35"/><stop offset="1" stop-color="#d8d8c8" stop-opacity="0"/></radialGradient><radialGradient id="s14"><stop offset="0" stop-color="#e05050"/><stop offset="0.3" stop-color="#e05050" stop-opacity="0.9"/><stop offset="0.6" stop-color="#e05050" stop-opacity="0.35"/><stop offset="1" stop-color="#e05050" stop-opacity="0"/></radialGradient><radialGradient id="s15"><stop offset="0" stop-color="#e07850"/><stop offset="0.3" stop-color="#e07850" stop-opacity="0.9"/><stop offset="0.6" stop-color="#e07850" stop-opacity="0.35"/><stop offset="1" stop-color="#e07850" stop-opacity="0"/></radialGradient><radialGradient id="s16"><stop offset="0" stop-color="#e09060"/><stop offset="0.3" stop-color="#e09060" stop-opacity="0.9"/><stop offset="0.6" stop-color="#e09060" stop-opacity="0.35"/><stop offset="1" stop-color="#e09060" stop-opacity="0"/></radialGradient><radialGradient id="s17"><stop offset="0" stop-color="#e09090"/><stop offset="0.3" stop-color="#e09090" stop-opacity="0.9"/><stop offset="0.6" stop-color="#e09090" stop-opacity="0.35"/><stop offset="1" stop-color="#e09090" stop-opacity="0"/></radialGradient><radialGradient id="s18"><stop offset="0" stop-color="#e8e8dc"/><stop offset="0.3" stop-color="#e8e8dc" stop-opacity="0.9"/><stop offset="0.6" stop-color="#e8e8dc" stop-opacity="0.35"/><stop offset="1" stop-color="#e8e8dc" stop-opacity="0"/></radialGradient><radialGradient id="s19"><stop offset="0" stop-color="#e8f4ff"/><stop offset="0.3" stop-color="#e8f4ff" stop-opacity="0.9"/><stop offset="0.6" stop-color="#e8f4ff" stop-opacity="0.35"/><stop offset="1" stop-color="#e8f4ff" stop-opacity="0"/></radialGradient><radialGradient id="s20"><stop offset="0" stop-color="#f09090"/><stop offset="0.3" stop-color="#f09090" stop-opacity="0.9"/><stop offset="0.6" stop-color="#f09090" stop-opacity="0.35"/><stop offset="1" stop-color="#f09090" stop-opacity="0"/></radialGradient><radialGradient id="s21"><stop offset="0" stop-color="#f0d8d8"/><stop offset="0.3" stop-color="#f0d8d8" stop-opacity="0.9"/><stop offset="0.6" stop-color="#f0d8d8" stop-opacity="0.35"/><stop offset="1" stop-color="#f0d8d8" stop-opacity="0"/></radialGradient><radialGradient id="s22"><stop offset="0" stop-color="#f0e0e0"/><stop offset="0.3" stop-color="#f0e0e0" stop-opacity="0.9"/><stop offset="0.6" stop-color="#f0e0e0" stop-opacity="0.35"/><stop offset="1" stop-color="#f0e0e0" stop-opacity="0"/></radialGradient><radialGradient id="s23"><stop offset="0" stop-color="#f0f0e0"/><stop offset="0.3" stop-color="#f0f0e0" stop-opacity="0.9"/><stop offset="0.6" stop-color="#f0f0e0" stop-opacity="0.35"/><stop offset="1" stop-color="#f0f0e0" stop-opacity="0"/></radialGradient><radialGradient id="s24"><stop offset="0" stop-color="#fff0d0"/><stop offset="0.3" stop-color="#fff0d0" stop-opacity="0.9"/><stop offset="0.6" stop-color="#fff0d0" stop-opacity="0.35"/><stop offset="1" stop-color="#fff0d0" stop-opacity="0"/></radialGradient><radialGradient id="s25"><stop offset="0" stop-color="#ffffc0"/><stop offset="0.3" stop-color="#ffffc0" stop-opacity="0.9"/><stop offset="0.6" stop-color="#ffffc0" stop-opacity="0.35"/><stop offset="1" stop-color="#ffffc0" stop-opacity="0"/></radialGradient><radialGradient id="s26"><stop offset="0" stop-color="#ffffc8"/><stop offset="0.3" stop-color="#ffffc8" stop-opacity="0.9"/><stop offset="0.6" stop-color="#ffffc8" stop-opacity="0.35"/><stop offset="1" stop-color="#ffffc8" stop-opacity="0"/></radialGradient><radialGradient id="s27"><stop offset="0" stop-color="#ffffe8"/><stop offset="0.3" stop-color="#ffffe8" stop-opacity="0.9"/><stop offset="0.6" stop-color="#ffffe8" stop-opacity="0.35"/><stop offset="1" stop-color="#ffffe8" stop-opacity="0"/></radialGradient><radialGradient id="s28"><stop offset="0" stop-color="#ffffee"/><stop offset="0.3" stop-color="#ffffee" stop-opacity="0.9"/><stop offset="0.6" stop-color="#ffffee" stop-opacity="0.35"/><stop offset="1" stop-color="#ffffee" stop-opacity="0"/></radialGradient></defs><circle cx="181" cy="106.3" r="3.77" fill="url(#s5)"/><circle cx="179" cy="136.9" r="4.35" fill="url(#s18)"/><circle cx="179" cy="136.9" r="1.26" fill="#ffffff" fill-opacity="0.75"/><circle cx="225" cy="157.5" r="4.06" fill="url(#s12)"/><circle cx="86" cy="173.8" r="4.06" fill="url(#s14)"/><circle cx="209" cy="186.4" r="4.35" fill="url(#s11)"/><circle cx="209" cy="186.4" r="1.26" fill="#ffffff" fill-opacity="0.75"/><circle cx="74.7" cy="207.8" r="4.06" fill="url(#s13)"/><circle cx="158" cy="209.5" r="4.5" fill="url(#s23)"/><circle cx="158" cy="209.5" r="1.3" fill="#ffffff" fill-opacity="0.75"/><circle cx="33.6" cy="232.6" r="3.19" fill="url(#s3)"/><circle cx="237" cy="237.2" r="3.19" fill="url(#s2)"/><circle cx="531" cy="105.6" r="3.77" fill="url(#s8)"/><circle cx="455" cy="129.6" r="4.64" fill="url(#s15)"/><circle cx="455" cy="129.6" r="1.34" fill="#ffffff" fill-opacity="0.75"/><circle cx="502" cy="136.6" r="3.77" fill="url(#s7)"/><circle cx="489" cy="147.6" r="4.64" fill="url(#s20)"/><circle cx="489" cy="147.6" r="1.34" fill="#ffffff" fill-opacity="0.75"/><circle cx="584" cy="144.6" r="3.19" fill="url(#s4)"/><circle cx="348.7" cy="165.4" r="6.09" fill="url(#s28)"/><circle cx="348.7" cy="165.4" r="1.76" fill="#ffffff" fill-opacity="0.75"/><circle cx="385" cy="163.6" r="3.48" fill="url(#s1)"/><circle cx="513" cy="218.6" r="3.77" fill="url(#s6)"/><circle cx="456.5" cy="230.1" r="4.64" fill="url(#s22)"/><circle cx="456.5" cy="230.1" r="1.34" fill="#ffffff" fill-opacity="0.75"/><circle cx="550" cy="245.6" r="3.77" fill="url(#s7)"/><circle cx="504" cy="256.6" r="4.64" fill="url(#s16)"/><circle cx="504" cy="256.6" r="1.34" fill="#ffffff" fill-opacity="0.75"/><circle cx="434" cy="267.6" r="4.64" fill="url(#s17)"/><circle cx="434" cy="267.6" r="1.34" fill="#ffffff" fill-opacity="0.75"/><circle cx="548" cy="301.6" r="6.96" fill="url(#s26)"/><circle cx="548" cy="301.6" r="2.02" fill="#ffffff" fill-opacity="0.75"/><circle cx="338" cy="294.6" r="3.77" fill="url(#s2)"/><circle cx="278" cy="340.6" r="6.09" fill="url(#s24)"/><circle cx="278" cy="340.6" r="1.76" fill="#ffffff" fill-opacity="0.75"/><circle cx="245.5" cy="383.3" r="4.06" fill="url(#s9)"/><circle cx="73.4" cy="392.6" r="4.06" fill="url(#s10)"/><circle cx="41" cy="396.6" r="3.19" fill="url(#s1)"/><circle cx="189" cy="458.6" r="4.64" fill="url(#s21)"/><circle cx="189" cy="458.6" r="1.34" fill="#ffffff" fill-opacity="0.75"/><circle cx="482.5" cy="314.0" r="5.51" fill="url(#s27)"/><circle cx="482.5" cy="314.0" r="1.6" fill="#ffffff" fill-opacity="0.75"/><circle cx="365" cy="314.6" r="4.06" fill="url(#s4)"/><circle cx="379" cy="322.6" r="3.48" fill="url(#s0)"/><circle cx="502.7" cy="438.6" r="5.8" fill="url(#s19)"/><circle cx="502.7" cy="438.6" r="1.68" fill="#ffffff" fill-opacity="0.75"/><circle cx="475" cy="512.1" r="6.38" fill="url(#s25)"/><circle cx="475" cy="512.1" r="1.85" fill="#ffffff" fill-opacity="0.75"/><g transform="translate(324 345.8) rotate(28)"><ellipse cx="0" cy="0" rx="29.5" ry="25.5" fill="url(#neb)"/><path d="M-13 -8 A15 12.5 0 0 1 14 0" fill="none" stroke="#6ac0fa" stroke-opacity="0.6" stroke-width="5" stroke-linecap="round" filter="url(#bl)"/><path d="M-24 4 A24 21 0 0 0 -6 21" fill="none" stroke="#b03890" stroke-opacity="0.7" stroke-width="2.5" stroke-linecap="round" filter="url(#bl)"/></g><path d="M325 307.8 C338 307.5 347 311 353.5 318.5 C361 327 365.5 336 365.4 346 C365.5 357 363 365 357 371.5 C349 379.5 339 384 323.5 384.2 C309 384 299 380 292.5 372.5 C285 364 281.5 353 281.5 340 C281.8 330 284 323 289.5 316.5 C297 309.5 309 307.8 325 307.8Z" fill="none" stroke="#e4e4de" stroke-width="0.9" stroke-dasharray="2.2 1.9"/></svg>
<div style="left:587.6px;top:92.7px;width:11.4px;height:432.9px;background:#fdfcf9;"></div>
<div style="left:587.6px;top:92.8px;width:11.4px;height:11px;background:#f1efe9;box-shadow:inset -1px -1px 0 #55534c, inset 1px 1px 0 #fff;"></div>
<div style="left:587.6px;top:514.2px;width:11.4px;height:11px;background:#f1efe9;box-shadow:inset -1px -1px 0 #55534c, inset 1px 1px 0 #fff;"></div>
<svg style="left:590.5px;top:96.3px" width="6" height="4" viewBox="0 0 6 4"><path d="M0.3 3.6 L5.7 3.6 L3 0.4Z" fill="#000"/></svg>
<svg style="left:590.5px;top:518.2px" width="6" height="4" viewBox="0 0 6 4"><path d="M0.3 0.4 L5.7 0.4 L3 3.6Z" fill="#000"/></svg>
<div style="left:587.6px;top:169px;width:11.4px;height:333px;background:linear-gradient(90deg,#fbfaf6 0%,#efede7 55%,#dedbd4 100%);box-shadow:inset -1px -1px 0 #55534c, inset 1px 1px 0 #fff;"></div>
<div style="left:3.8px;top:525.6px;width:583.8px;height:11px;background:#fdfcf9;"></div>
<div style="left:3.8px;top:525.6px;width:11.4px;height:11px;background:#f1efe9;box-shadow:inset -1px -1px 0 #55534c, inset 1px 1px 0 #fff;"></div>
<div style="left:576.2px;top:525.6px;width:11.4px;height:11px;background:#f1efe9;box-shadow:inset -1px -1px 0 #55534c, inset 1px 1px 0 #fff;"></div>
<svg style="left:7.2px;top:528.2px" width="4" height="6" viewBox="0 0 4 6"><path d="M3.6 0.3 L3.6 5.7 L0.4 3Z" fill="#000"/></svg>
<svg style="left:580.2px;top:528.2px" width="4" height="6" viewBox="0 0 4 6"><path d="M0.4 0.3 L0.4 5.7 L3.6 3Z" fill="#000"/></svg>
<div style="left:61px;top:525.6px;width:455.5px;height:11px;background:linear-gradient(180deg,#fffffa 0%,#f3f1ea 50%,#dedbd5 100%);box-shadow:inset -1px -1px 0 #55534c, inset 1px 0 0 #d0cdc6;"></div>
<div style="left:587.6px;top:525.6px;width:11.4px;height:11px;background:#ebe9e3;"></div>
<svg style="left:588.5px;top:526px" width="10" height="10.5" viewBox="0 0 10 11"><path d="M1 10.5 L9.5 2 M4 10.5 L9.5 5 M7 10.5 L9.5 8" stroke="#55534c" stroke-width="0.9"/></svg>
<div style="left:1px;top:536.6px;width:598px;height:1px;background:#dcd9d2;"></div>
<div style="left:1px;top:537px;width:600px;height:2px;background:#ffffff;"></div>
<div style="left:0px;top:539px;width:602px;height:1px;background:#33312c;"></div>
<div style="left:605px;top:76px;width:110px;height:464px;background:#d7d2ca;"></div>
<div style="left:604.5px;top:78px;width:110.5px;height:11px;background:#e2dfd7;"></div>
<div style="left:604.5px;top:77px;width:110.5px;height:1px;background:#f8f6f0;"></div>
<span class="t" style="left:606.7px;top:78.25px;font-size:7.77px;line-height:10.1px;height:10.1px;color:#000;text-shadow:0 0 0.5px rgba(0,0,0,0.5);letter-spacing:-0.324px;">Materials</span>
<div style="left:639px;top:80.6px;width:47.5px;height:5.4px;background:#aaa8a2;background:linear-gradient(180deg,#b4b2ac,#a4a29c);"></div>
<svg style="left:689px;top:79px" width="25" height="9" viewBox="0 0 25 9"><rect x="1.5" y="6" width="3.6" height="1.3" fill="#000"/><rect x="9.5" y="1.5" width="5" height="5" fill="none" stroke="#000" stroke-width="1.2"/><path d="M19.5 1.6 L23.5 6.4 M23.5 1.6 L19.5 6.4" stroke="#000" stroke-width="1.3"/></svg>
<div style="left:604.5px;top:89px;width:110.5px;height:198px;background:#d7d2ca;"></div>
<div style="left:605px;top:89px;width:110px;height:13.5px;background:#eceae4;"></div>
<div style="left:643px;top:89.5px;width:49px;height:13px;background:#e2dfd8;"></div>
<div style="left:691.5px;top:90px;width:1px;height:11.5px;background:#2a2a2a;"></div>
<svg style="left:609px;top:91px" width="8" height="8" viewBox="0 0 8 8"><defs><linearGradient id="cg" x1="0" x2="1" y1="0" y2="1"><stop offset="0" stop-color="#000"/><stop offset="0.45" stop-color="#303030"/><stop offset="0.6" stop-color="#e040a0"/><stop offset="0.8" stop-color="#40e0e0"/><stop offset="1" stop-color="#fff"/></linearGradient></defs><rect width="7.5" height="7.5" fill="url(#cg)"/><rect width="3" height="7.5" fill="#101010"/></svg>
<span class="t" style="left:619.5px;top:89.75px;font-size:7.77px;line-height:10.1px;height:10.1px;color:#5a5464;text-shadow:0 0 0.5px rgba(90,84,100,0.5);letter-spacing:-0.326px;">Colors</span>
<svg style="left:645px;top:91.5px" width="9" height="7" viewBox="0 0 9 7"><path d="M0 1 H9 M0 3.5 H9 M0 6 H9" stroke="#6a6a6a" stroke-width="1" stroke-dasharray="1.5 1"/><path d="M1 0 V7 M4.5 0 V7 M8 0 V7" stroke="#6a6a6a" stroke-width="0.8" stroke-dasharray="1.5 1"/></svg>
<span class="t" style="left:656px;top:89.75px;font-size:7.77px;line-height:10.1px;height:10.1px;color:#000;text-shadow:0 0 0.5px rgba(0,0,0,0.5);letter-spacing:-0.209px;">Swatches</span>
<div style="left:606.5px;top:103px;width:105px;height:69.5px;background:#dcd9d3;background:linear-gradient(180deg,#e6e3dc 0%,#dad7d1 35%,#dedbd5 70%,#e9e7e1 100%);box-shadow:inset 1px 1px 0 #77746c, inset -1px -1px 0 #f8f6f0;"></div>
<div style="left:607.5px;top:104px;width:103px;height:5px;background:#e6e3da;background:linear-gradient(90deg,#e8e0c8,#f0d8e0 25%,#e4e1da 50%,#d8d5ce 100%);"></div>
<div style="left:607.3px;top:109.4px;width:8.5px;height:8.5px;background:#0000f0;"></div>
<div style="left:615.66px;top:109.4px;width:8.5px;height:8.5px;background:#10e0f8;"></div>
<div style="left:624.02px;top:109.4px;width:8.5px;height:8.5px;background:#10e820;"></div>
<div style="left:632.38px;top:109.4px;width:8.5px;height:8.5px;background:#100810;"></div>
<div style="left:640.74px;top:109.4px;width:8.5px;height:8.5px;background:#080808;"></div>
<div style="left:649.1px;top:109.4px;width:8.5px;height:8.5px;background:#3c3c3c;"></div>
<div style="left:657.46px;top:109.4px;width:8.5px;height:8.5px;background:#605860;"></div>
<div style="left:665.82px;top:109.4px;width:8.5px;height:8.5px;background:#808088;"></div>
<div style="left:674.18px;top:109.4px;width:8.5px;height:8.5px;background:#a0a0a8;"></div>
<div style="left:682.54px;top:109.4px;width:8.5px;height:8.5px;background:#c8c8cc;"></div>
<div style="left:690.9px;top:109.4px;width:8.5px;height:8.5px;background:#ececec;"></div>
<div style="left:699.26px;top:109.4px;width:8.5px;height:8.5px;background:#fcfcfc;"></div>
<div style="left:607.3px;top:117.8px;width:8.5px;height:8.5px;background:#f010f0;"></div>
<div style="left:615.66px;top:117.8px;width:8.5px;height:8.5px;background:#f01010;"></div>
<div style="left:624.02px;top:117.8px;width:8.5px;height:8.5px;background:linear-gradient(180deg,#f8d040,#f0a838);"></div>
<div style="left:632.38px;top:117.8px;width:8.5px;height:8.5px;background:linear-gradient(180deg,#f8e050,#f0c838);"></div>
<div style="left:640.74px;top:117.8px;width:8.5px;height:8.5px;background:#e01010;"></div>
<div style="left:649.1px;top:117.8px;width:8.5px;height:8.5px;background:#081008;"></div>
<div style="left:657.46px;top:117.8px;width:8.5px;height:8.5px;background:#18c8f0;"></div>
<div style="left:665.82px;top:117.8px;width:8.5px;height:8.5px;background:#f8a810;"></div>
<div style="left:674.18px;top:117.8px;width:8.5px;height:8.5px;background:#f8f000;"></div>
<div style="left:682.54px;top:117.8px;width:8.5px;height:8.5px;background:linear-gradient(180deg,#0810a0,#2050f0);"></div>
<div style="left:690.9px;top:117.8px;width:8.5px;height:8.5px;background:linear-gradient(180deg,#1878e8,#c8e8f8);"></div>
<div style="left:699.26px;top:117.8px;width:8.5px;height:8.5px;background:linear-gradient(180deg,#a8a0b0 0%,#88889a 45%,#f0f0f0 55%,#c0c0c0 100%);"></div>
<div style="left:607.3px;top:126.2px;width:8.5px;height:8.5px;background:#283028;"></div>
<div style="left:615.66px;top:126.2px;width:8.5px;height:8.5px;background:linear-gradient(90deg,#089808,#40e040);"></div>
<div style="left:624.02px;top:126.2px;width:8.5px;height:8.5px;background:#9090d8;"></div>
<svg style="left:607.3px;top:126.2px" width="8" height="8" viewBox="0 0 8 8"><path d="M1 1 L3 3 M5 1 L7 3 M3 5 L5 7 M1 6 L2 7 M6 5 L7 6" stroke="#e8f0e8" stroke-width="0.9"/></svg>
<svg style="left:624px;top:126.2px" width="8" height="8" viewBox="0 0 8 8"><path d="M1 2 L3 4 M5 2 L7 4 M3 5 L5 7" stroke="#e0e0ff" stroke-width="0.9"/></svg>
<div style="left:607.5px;top:171px;width:103px;height:1px;background:#fbfaf6;"></div>
<div style="left:606.5px;top:176.8px;width:105px;height:11px;background:#dcd9d1;box-shadow:inset 0 1px 0 #77746c, inset 0 -1px 0 #55534c, inset 1px 0 0 #8a877f, inset -1px 0 0 #8a877f;"></div>
<div style="left:632.5px;top:177.5px;width:1px;height:9.5px;background:#77746c;"></div>
<div style="left:633.5px;top:177.5px;width:1px;height:9.5px;background:#f4f2ec;"></div>
<div style="left:658px;top:177.5px;width:1px;height:9.5px;background:#77746c;"></div>
<div style="left:659px;top:177.5px;width:1px;height:9.5px;background:#f4f2ec;"></div>
<div style="left:683.5px;top:177.5px;width:1px;height:9.5px;background:#77746c;"></div>
<div style="left:684.5px;top:177.5px;width:1px;height:9.5px;background:#f4f2ec;"></div>
<svg style="left:616px;top:178.3px" width="8" height="8" viewBox="0 0 10 10"><circle cx="5" cy="5" r="4.2" fill="#151515"/><path d="M5 1 A4 4 0 0 1 9 5 L5 5Z" fill="#f0f0f0"/><path d="M1 5 H5 V9" fill="none" stroke="#ddd" stroke-width="0.8"/></svg>
<svg style="left:629px;top:184.5px" width="2.5" height="2.5" viewBox="0 0 3 3"><path d="M3 0 V3 H0Z" fill="#000"/></svg>
<svg style="left:642.5px;top:178.3px" width="6.4" height="8" viewBox="0 0 8 10"><path d="M1 0.8 H5.4 L7.2 2.6 V9.2 H1Z" fill="#fff" stroke="#000" stroke-width="1.3"/><path d="M2.4 4 H5.8 M2.4 5.8 H5.8 M2.4 7.4 H5.8" stroke="#000" stroke-width="1"/></svg>
<svg style="left:668px;top:178.3px" width="6.4" height="8" viewBox="0 0 8 10"><path d="M1 1.5 H5.4 L7 3 V9 H1Z" fill="#eceae4" stroke="#aeaba4" stroke-width="1"/></svg>
<svg style="left:696px;top:179.8px" width="3.4" height="5" viewBox="0 0 4 6"><path d="M0.4 0.3 L0.4 5.7 L3.6 3Z" fill="#000"/></svg>
<div style="left:605px;top:189px;width:109px;height:1px;background:#c0bdb6;"></div>
<div style="left:625px;top:192.3px;width:43.2px;height:32px;background:#fefefe;box-shadow:inset 1px 1px 0 #c8c5be;"></div>
<div style="left:671.2px;top:194.3px;width:13px;height:12.2px;background:#fcfcfc;box-shadow:inset 1px 1px 0 #c8c5be;"></div>
<div style="left:679.6px;top:206px;width:13.2px;height:13.5px;background:#fcfcfc;box-shadow:inset 1px 1px 0 #c8c5be;"></div>
<svg style="left:672px;top:209px" width="6" height="6" viewBox="0 0 6 6"><path d="M0.8 0.8 L5 5 M0.8 3 V0.8 H3 M5 2.8 V5 H2.8" fill="none" stroke="#000" stroke-width="1.1"/></svg>
<div style="left:650px;top:225.5px;width:42.3px;height:29.5px;background:#d5d2ca;box-shadow:inset 0 0 0 0.5px #c0bdb6;"></div>
<svg style="left:658.8px;top:226.6px" width="25" height="25" viewBox="0 0 25 25"><circle cx="12.5" cy="12.5" r="9.2" fill="none" stroke="#a6a39c" stroke-width="3"/><path d="M6 19 L19 6" stroke="#a6a39c" stroke-width="3"/></svg>
<div style="left:625px;top:224.3px;width:43.2px;height:9px;background:#e2dfd7;box-shadow:inset 0 0 0 0.5px #b0ada6;"></div>
<div style="left:639.5px;top:224.5px;width:1px;height:8.5px;background:#a8a59d;"></div>
<div style="left:654px;top:224.5px;width:1px;height:8.5px;background:#a8a59d;"></div>
<svg style="left:625.5px;top:223.3px" width="43" height="11" viewBox="0 0 43 11"><circle cx="7" cy="5.4" r="3.2" fill="#0a0a0a"/><path d="M13.4 8 V10.4 H11Z" fill="#000"/><g stroke="#333" stroke-width="0.7" fill="none"><path d="M20.5 2 V9 M17.3 3.8 L23.7 7.2 M17.3 7.2 L23.7 3.8"/></g><circle cx="34.5" cy="5.4" r="2.8" fill="none" stroke="#a09d96" stroke-width="0.9"/></svg>
<div style="left:650px;top:255px;width:42.3px;height:10.5px;background:#e4e1d9;box-shadow:inset 0 0 0 0.5px #b0ada6;"></div>
<div style="left:663.5px;top:255.5px;width:1px;height:10px;background:#a8a59d;"></div>
<div style="left:678px;top:255px;width:14.5px;height:10.5px;background:#f4f2ec;box-shadow:inset 0 0 0 0.6px #807d76;"></div>
<svg style="left:650.5px;top:255px" width="43" height="11" viewBox="0 0 43 11"><circle cx="6.6" cy="5.4" r="3.2" fill="#0a0a0a"/><path d="M13 8 V10.4 H10.6Z" fill="#000"/><g stroke="#444" stroke-width="0.7" fill="none"><path d="M20.5 2 V9 M17.3 3.8 L23.7 7.2 M17.3 7.2 L23.7 3.8"/></g><circle cx="35" cy="5.4" r="2.7" fill="none" stroke="#000" stroke-width="1.2"/><path d="M33 7.4 L37 3.4" stroke="#000" stroke-width="1.1"/></svg>
<svg style="left:638.3px;top:236.3px" width="8" height="8" viewBox="0 0 8 8"><path d="M1 0.8 V3.5 H6.8 M1 0.8 L0 2.2 M1 0.8 L2.2 2.2 M6.8 3.5 L5.4 2.4 M6.8 3.5 L5.4 4.8" fill="none" stroke="#000" stroke-width="1"/></svg>
<div style="left:626px;top:269.3px;width:6.8px;height:6.8px;background:#fff;box-shadow:inset 1px 1px 0 #55534c, inset -1px -1px 0 #f8f6f0;"></div>
<span class="t" style="left:636px;top:268.08px;font-size:7.56px;line-height:9.83px;height:9.83px;color:#000;text-shadow:0 0 0.5px rgba(0,0,0,0.5);letter-spacing:-0.382px;">All tools</span>
<div style="left:605px;top:286.5px;width:110px;height:1px;background:#77746c;"></div>
<div style="left:605px;top:287.5px;width:110px;height:1px;background:#f8f6f0;"></div>
<div style="left:604.5px;top:291px;width:110.5px;height:11px;background:#e2dfd7;"></div>
<div style="left:604.5px;top:290px;width:110.5px;height:1px;background:#f8f6f0;"></div>
<span class="t" style="left:606.7px;top:291.25px;font-size:7.77px;line-height:10.1px;height:10.1px;color:#000;text-shadow:0 0 0.5px rgba(0,0,0,0.5);letter-spacing:-0.388px;">Layer</span>
<div style="left:629px;top:293.6px;width:57.5px;height:5.4px;background:#aaa8a2;background:linear-gradient(180deg,#c2c0ba,#b6b4ae);"></div>
<svg style="left:689px;top:292px" width="25" height="9" viewBox="0 0 25 9"><rect x="1.5" y="6" width="3.6" height="1.3" fill="#000"/><rect x="9.5" y="1.5" width="5" height="5" fill="none" stroke="#000" stroke-width="1.2"/><path d="M19.5 1.6 L23.5 6.4 M23.5 1.6 L19.5 6.4" stroke="#000" stroke-width="1.3"/></svg>
<div style="left:604.5px;top:301px;width:110.5px;height:87px;background:#d7d2ca;"></div>
<div style="left:605px;top:301px;width:110px;height:14.5px;background:#e4e1d9;"></div>
<svg style="left:608.1999999999999px;top:304px" width="8.8" height="8.8" viewBox="0 0 10 10"><rect x="0.8" y="0.8" width="6" height="6" fill="#18a8a0" stroke="#042c2c" stroke-width="1.4"/><rect x="3.4" y="3.4" width="6" height="6" fill="#b8f0f0" stroke="#042c2c" stroke-width="1.4"/></svg>
<svg style="left:620.1999999999999px;top:304px" width="8.8" height="8.8" viewBox="0 0 10 10"><rect x="0.8" y="0.8" width="6" height="6" fill="#0a1818" stroke="#042c2c" stroke-width="1.4"/><rect x="3.4" y="3.4" width="6" height="6" fill="#38c8c0" stroke="#042c2c" stroke-width="1.4"/><rect x="5" y="5" width="2.6" height="2.6" fill="#042c2c"/></svg>
<svg style="left:632.6999999999999px;top:304px" width="8.8" height="8.8" viewBox="0 0 10 10"><rect x="0.7" y="0.7" width="8.6" height="8.6" fill="#d8c8c8" stroke="#181818" stroke-width="1.4"/><circle cx="5" cy="5" r="2.8" fill="#302028"/><path d="M2 2 L8 8 M8 2 L2 8" stroke="#181818" stroke-width="0.7"/></svg>
<svg style="left:644.6999999999999px;top:304px" width="8.8" height="8.8" viewBox="0 0 10 10"><rect x="0.7" y="0.7" width="8.6" height="8.6" fill="#c8e0e0" stroke="#0a2020" stroke-width="1.5"/><path d="M2.4 7.6 V2.6 L7.4 7.6 V2.6" fill="none" stroke="#000" stroke-width="1.4"/><rect x="1" y="7.6" width="8" height="1.6" fill="#087870"/></svg>
<svg style="left:661.4px;top:304px" width="8.8" height="8.8" viewBox="0 0 10 10"><rect x="0.5" y="0.5" width="4.5" height="4.5" fill="#087868" stroke="#042c28" stroke-width="1"/><rect x="5" y="5" width="4.5" height="4.5" fill="#087868" stroke="#042c28" stroke-width="1"/><path d="M3 3 L7 7" stroke="#042c28" stroke-width="1.6"/></svg>
<svg style="left:673.9px;top:304px" width="8.8" height="8.8" viewBox="0 0 10 10"><rect x="0.5" y="1" width="5.5" height="5.5" fill="#8e8b84"/><rect x="3.5" y="3.5" width="6" height="6" fill="#7c7972"/></svg>
<div style="left:685.5px;top:303px;width:1px;height:11px;background:#c0bdb6;"></div>
<svg style="left:689.9px;top:304px" width="8.8" height="8.8" viewBox="0 0 10 10"><path d="M1 9 L3 5 L8 0.8 L9.4 2.2 L5 7Z" fill="#2050c0"/><path d="M6.4 1.6 L8 0.4 L9.8 2 L8.6 3.6Z" fill="#e8a020"/><path d="M0.4 1.8 H4 M2.2 0 V3.6" stroke="#106868" stroke-width="1.1"/><path d="M1 9 L2.4 6.4 L3.6 7.6Z" fill="#000"/></svg>
<svg style="left:707.5px;top:302.8px" width="5" height="4" viewBox="0 0 6 5"><path d="M0.6 0.5 L2.6 2.5 L0.6 4.5 M3.2 0.5 L5.2 2.5 L3.2 4.5" fill="none" stroke="#000" stroke-width="1.2"/></svg>
<div style="left:605.5px;top:315px;width:53.5px;height:69px;background:#ffffff;box-shadow:inset 1px 1px 0 #33312c, inset -1px -1px 0 #d0cdc6;"></div>
<div style="left:661px;top:315px;width:54px;height:69px;background:#ffffff;box-shadow:inset 1px 1px 0 #33312c, inset 0 -1px 0 #d0cdc6;"></div>
<svg style="left:614.5px;top:317.5px" width="7" height="9" viewBox="0 0 7 9"><path d="M0.7 1.6 L2 0.6 H6.3 V8.4 H0.7Z" fill="#0a7868" stroke="#04362e" stroke-width="0.9"/></svg>
<div style="left:625px;top:317.2px;width:33.5px;height:9px;background:#0a1a6a;"></div>
<span class="t" style="left:626px;top:317.16px;font-size:7.14px;line-height:9.28px;height:9.28px;color:#c8d0f0;text-shadow:0 0 0.5px rgba(200,208,240,0.5);overflow:hidden;letter-spacing:-0.653px;">Background</span>
<svg style="left:663.5px;top:319px" width="9" height="6" viewBox="0 0 9 6"><path d="M0.3 3 Q4.5 -1 8.7 3 Q4.5 6.5 0.3 3Z" fill="#1a1a1a"/><circle cx="4.5" cy="2.8" r="1.1" fill="#888"/></svg>
<div style="left:673px;top:317.2px;width:31px;height:9px;background:linear-gradient(90deg,#504e4a 0%,#8a8884 40%,#d8d6d0 80%,#f4f2ee 100%);"></div>
<span class="t" style="left:676.5px;top:317.56px;font-size:6.83px;line-height:8.88px;height:8.88px;color:#d8d8d8;text-shadow:0 0 0.5px rgba(216,216,216,0.5);letter-spacing:-0.802px;">100</span>
<div style="left:704px;top:317.5px;width:11px;height:9px;background:#ecebe6;box-shadow:inset 1px 0 0 #c0bdb6;"></div>
<svg style="left:698px;top:318px" width="4" height="4" viewBox="0 0 4 4"><path d="M0.5 0.5 L3.5 3.5" stroke="#222" stroke-width="0.8"/></svg>
<div style="left:606.5px;top:372px;width:52px;height:11.5px;background:#f2f0ea;"></div>
<div style="left:606.5px;top:372px;width:10.5px;height:11.5px;background:#d9d6ce;box-shadow:inset 1px 1px 0 #fff, inset -1px -1px 0 #55534c;"></div>
<div style="left:648.0px;top:372px;width:10.5px;height:11.5px;background:#d9d6ce;box-shadow:inset 1px 1px 0 #fff, inset -1px -1px 0 #55534c;"></div>
<svg style="left:609.8px;top:374.95px" width="4" height="6" viewBox="0 0 4 6"><path d="M3.6 0.3 L3.6 5.7 L0.4 3Z" fill="#000"/></svg>
<svg style="left:651.3px;top:374.95px" width="4" height="6" viewBox="0 0 4 6"><path d="M0.4 0.3 L0.4 5.7 L3.6 3Z" fill="#000"/></svg>
<div style="left:617px;top:372px;width:28.5px;height:11.5px;background:#d6d3cb;box-shadow:inset 1px 1px 0 #fff, inset -1px -1px 0 #55534c;"></div>
<div style="left:662px;top:372px;width:52px;height:11.5px;background:#f2f0ea;"></div>
<div style="left:662px;top:372px;width:10.5px;height:11.5px;background:#d9d6ce;box-shadow:inset 1px 1px 0 #fff, inset -1px -1px 0 #55534c;"></div>
<div style="left:703.5px;top:372px;width:10.5px;height:11.5px;background:#d9d6ce;box-shadow:inset 1px 1px 0 #fff, inset -1px -1px 0 #55534c;"></div>
<svg style="left:665.3px;top:374.95px" width="4" height="6" viewBox="0 0 4 6"><path d="M3.6 0.3 L3.6 5.7 L0.4 3Z" fill="#000"/></svg>
<svg style="left:706.8px;top:374.95px" width="4" height="6" viewBox="0 0 4 6"><path d="M0.4 0.3 L0.4 5.7 L3.6 3Z" fill="#000"/></svg>
<div style="left:672.5px;top:372px;width:11.5px;height:11.5px;background:#d6d3cb;box-shadow:inset 1px 1px 0 #fff, inset -1px -1px 0 #55534c;"></div>
<div style="left:605px;top:384.5px;width:110px;height:1px;background:#f8f6f0;"></div>
<div style="left:605px;top:387.5px;width:110px;height:1px;background:#77746c;"></div>
<div style="left:604.5px;top:389.5px;width:110.5px;height:11px;background:#e2dfd7;"></div>
<div style="left:604.5px;top:388.5px;width:110.5px;height:1px;background:#f8f6f0;"></div>
<span class="t" style="left:606.7px;top:389.75px;font-size:7.77px;line-height:10.1px;height:10.1px;color:#000;text-shadow:0 0 0.5px rgba(0,0,0,0.5);letter-spacing:-0.109px;">Overview</span>
<div style="left:642px;top:392.1px;width:44.5px;height:5.4px;background:#aaa8a2;background:linear-gradient(180deg,#b4b2ac,#a4a29c);"></div>
<svg style="left:689px;top:390.5px" width="25" height="9" viewBox="0 0 25 9"><rect x="1.5" y="6" width="3.6" height="1.3" fill="#000"/><rect x="9.5" y="1.5" width="5" height="5" fill="none" stroke="#000" stroke-width="1.2"/><path d="M19.5 1.6 L23.5 6.4 M23.5 1.6 L19.5 6.4" stroke="#000" stroke-width="1.3"/></svg>
<div style="left:604.5px;top:400.5px;width:110.5px;height:139px;background:#d7d2ca;"></div>
<div style="left:605px;top:400.5px;width:110px;height:14px;background:#eceae4;"></div>
<div style="left:606px;top:401px;width:42.5px;height:13.5px;background:#e2dfd8;"></div>
<div style="left:648.5px;top:401.5px;width:1px;height:12px;background:#2a2a2a;"></div>
<div style="left:677px;top:403px;width:1px;height:9px;background:#6a6860;"></div>
<svg style="left:609px;top:403.5px" width="9" height="7" viewBox="0 0 9 7"><path d="M0.3 3 Q4.5 -0.6 8.7 3 L8 4.4 Q4.5 6 1 4.4Z" fill="#1a1a1a"/><path d="M5.5 4.5 L8.6 5.8" stroke="#1a1a1a" stroke-width="1"/></svg>
<span class="t" style="left:619px;top:401.15px;font-size:7.77px;line-height:10.1px;height:10.1px;color:#000;text-shadow:0 0 0.5px rgba(0,0,0,0.5);letter-spacing:-0.232px;">Preview</span>
<svg style="left:652px;top:403.3px" width="6" height="7.6" viewBox="0 0 7 9"><path d="M0.7 0.7 H4.6 L6.3 2.4 V8.3 H0.7Z" fill="#fff" stroke="#000" stroke-width="1"/><rect x="2" y="4.4" width="3" height="3" fill="#222"/></svg>
<span class="t" style="left:661.5px;top:401.15px;font-size:7.77px;line-height:10.1px;height:10.1px;color:#77746c;text-shadow:0 0 0.5px rgba(119,116,108,0.5);letter-spacing:-0.238px;">Info</span>
<div style="left:607.5px;top:415px;width:103.5px;height:104px;background:#e2e0da;background-color:#f4f2ee;background-image:repeating-conic-gradient(#a9a6a0 0 25%,#f4f2ee 0 50%);background-size:3.4px 3.4px;box-shadow:inset 0 1px 0 #55534c, inset 0 -1px 0 #77746c;"></div>
<div style="left:607.5px;top:428.3px;width:103.5px;height:76px;background:#000;"></div>
<div style="left:616px;top:440px;width:84.5px;height:62px;border:1px solid #8c8c8c;"></div>
<svg style="left:607.5px;top:428.3px" width="104" height="76" viewBox="0 0 104 76"><defs><radialGradient id="mn"><stop offset="0" stop-color="#0830b0"/><stop offset="0.35" stop-color="#1868e8"/><stop offset="0.7" stop-color="#3090ff"/><stop offset="1" stop-color="#2040c0" stop-opacity="0"/></radialGradient></defs><ellipse cx="54" cy="48.4" rx="4" ry="4" fill="url(#mn)"/><circle cx="54.3" cy="48.6" r="1" fill="#0a1a70"/><g fill="#8a8a84"><circle cx="58.2" cy="22.5" r="0.9"/><circle cx="73.3" cy="31.5" r="0.8"/><circle cx="78.5" cy="20" r="0.8"/><circle cx="76.5" cy="43" r="0.9"/><circle cx="86.5" cy="42" r="1" fill="#c8c8c0"/><circle cx="80" cy="61.5" r="0.9"/><circle cx="76" cy="72" r="0.8"/><circle cx="35.5" cy="63.5" r="0.8" fill="#4a4a46"/><circle cx="47.5" cy="47.3" r="0.7" fill="#5a5a56"/><circle cx="32" cy="5" r="0.7" fill="#4a4a46"/><circle cx="99.5" cy="15" r="0.7"/><circle cx="70" cy="37" r="0.7" fill="#5a5a56"/></g></svg>
<div style="left:608px;top:521.5px;width:31.5px;height:13.3px;background:#fff;box-shadow:inset 1px 1px 0 #55534c, inset -1px -1px 0 #f8f6f0;"></div>
<span class="t" style="left:610.3px;top:522.29px;font-size:7.56px;line-height:9.83px;height:9.83px;color:#000;text-shadow:0 0 0.5px rgba(0,0,0,0.5);letter-spacing:-0.598px;">100</span>
<div style="left:608px;top:534.8px;width:24px;height:1.6px;background:#0a1a5a;"></div>
<div style="left:639.5px;top:522px;width:6px;height:6px;background:#d9d6ce;box-shadow:inset 1px 1px 0 #fff, inset -1px -1px 0 #6a6860;"></div>
<div style="left:639.5px;top:528px;width:6px;height:6px;background:#d9d6ce;box-shadow:inset 1px 1px 0 #fff, inset -1px -1px 0 #6a6860;"></div>
<svg style="left:640.5px;top:523.5px" width="4" height="9" viewBox="0 0 4 9"><path d="M0.2 2.4 L3.8 2.4 L2 0.4Z M0.2 6 L3.8 6 L2 8Z" fill="#000"/></svg>
<div style="left:645.5px;top:521.5px;width:6.5px;height:13px;background:#d9d6ce;box-shadow:inset 1px 1px 0 #fff, inset -1px -1px 0 #55534c;"></div>
<svg style="left:646.8px;top:527.0999999999999px" width="4" height="2.4" viewBox="0 0 5 3"><path d="M0.3 0.2 L4.7 0.2 L2.5 2.8Z" fill="#000"/></svg>
<svg style="left:659px;top:522.5px" width="10" height="11" viewBox="0 0 10 11"><path d="M0.5 10.2 H4.5 M2.6 10 V4.4 L1 5.2" fill="none" stroke="#000" stroke-width="1.3"/><circle cx="6.6" cy="3.4" r="2.3" fill="#e8f0f0" stroke="#333" stroke-width="0.8"/><path d="M8.2 5 L9.6 6.6" stroke="#333" stroke-width="0.9"/></svg>
<svg style="left:678.5px;top:522.5px" width="10" height="11" viewBox="0 0 10 11"><path d="M0.5 10.2 H4.5 M2.6 10 V4.4 L1 5.2" fill="none" stroke="#000" stroke-width="1.3"/><circle cx="6.6" cy="3.4" r="2.3" fill="#e8f0f0" stroke="#333" stroke-width="0.8"/><path d="M8.2 5 L9.6 6.6" stroke="#333" stroke-width="0.9"/></svg>
<svg style="left:697.5px;top:523px" width="11" height="11" viewBox="0 0 11 11"><rect x="4" y="0.8" width="6.5" height="6" fill="#8a8780"/><circle cx="3.8" cy="7" r="2.8" fill="#dad7cf" stroke="#77746c" stroke-width="1"/></svg>
<div style="left:605px;top:538.5px;width:110px;height:1px;background:#77746c;"></div>
<div style="left:0px;top:540px;width:715px;height:13px;background:#dad6ce;"></div>
<div style="left:602px;top:539px;width:113px;height:1px;background:#77746c;"></div>
<div style="left:0px;top:540px;width:715px;height:1px;background:#ebe8e2;"></div>
<span class="t" style="left:1px;top:542.62px;font-size:7.67px;line-height:9.97px;height:9.97px;color:#000;text-shadow:0 0 0.5px rgba(0,0,0,0.5);letter-spacing:0.01px;">Freehand Selection Tool: Click and draw to select. Use Shift to add to the existing selection, or Ctrl to remove.</span>
<div style="left:541px;top:541.5px;width:173px;height:11px;background:#e4e1d9;box-shadow:inset 1px 1px 0 #8a877f, inset -1px -1px 0 #fbfaf6;"></div>
<span class="t" style="left:543px;top:542.62px;font-size:7.67px;line-height:9.97px;height:9.97px;color:#000;text-shadow:0 0 0.5px rgba(0,0,0,0.5);letter-spacing:0.211px;">(x:781 y:550) -- Image:  1280 x 960 x 16 million</span>
<div style="left:0px;top:553px;width:715px;height:19px;background:#d7d3cb;"></div>
<div style="left:0px;top:553.5px;width:715px;height:1px;background:#e6e3dc;"></div>
<div style="left:1.5px;top:555.3px;width:37px;height:15.2px;background:#dedbd3;box-shadow:inset 1px 1px 0 #fff, inset -1px -1px 0 #33312c;"></div>
<svg style="left:5px;top:557.5px" width="11" height="11" viewBox="0 0 11 11"><path d="M0.5 2 Q3 0.5 5 2 V5.2 Q3 3.8 0.5 5.2Z" fill="#d83020"/><path d="M5.6 2 Q8 3.4 10.4 2 V5.2 Q8 6.6 5.6 5.2Z" fill="#30a030"/><path d="M0.5 6 Q3 4.6 5 6 V9.4 Q3 8 0.5 9.4Z" fill="#2848c8"/><path d="M5.6 6 Q8 7.4 10.4 6 V9.4 Q8 10.8 5.6 9.4Z" fill="#e8c020"/><rect x="0" y="1.5" width="11" height="8.5" fill="#000" fill-opacity="0.35"/></svg>
<span class="t" style="left:17px;top:557.7px;font-size:8.61px;line-height:11.19px;height:11.19px;color:#000;font-weight:bold;text-shadow:0 0 0.5px rgba(0,0,0,0.5);letter-spacing:-0.019px;">Start</span>
<div style="left:42px;top:556px;width:1px;height:14px;background:#8a877f;"></div>
<div style="left:43px;top:556px;width:1px;height:14px;background:#fbfaf6;"></div>
<svg style="left:47.3px;top:556.8px" width="10" height="10" viewBox="0 0 10 10"><rect x="0.5" y="1" width="9" height="8" rx="2.5" fill="#3a78d0"/><path d="M2 3.5 L4.5 5.5 L8 2.5" stroke="#e8f4ff" stroke-width="1.5" fill="none"/><rect x="1" y="6.5" width="4" height="2.5" fill="#1a3a8a"/></svg>
<svg style="left:60px;top:556.8px" width="10" height="10" viewBox="0 0 10 10"><circle cx="4" cy="4" r="3" fill="#f0e020" stroke="#3a3a00" stroke-width="1"/><path d="M6 6 L9.5 9" stroke="#3a3a00" stroke-width="1.8"/></svg>
<svg style="left:73px;top:556.8px" width="10" height="10" viewBox="0 0 10 10"><rect x="0.5" y="0.5" width="9" height="9" fill="#20a8c8"/><path d="M1.5 2 L3.2 8 L5 3.5 L6.8 8 L8.5 2" stroke="#0a2a6a" stroke-width="1.2" fill="none"/></svg>
<svg style="left:85.8px;top:556.8px" width="10" height="10" viewBox="0 0 10 10"><rect x="0.5" y="0.5" width="8" height="8.5" fill="#f0f0d0" stroke="#3a6a3a" stroke-width="1"/><rect x="3" y="3" width="4" height="4" fill="#30a040"/><rect x="6" y="6.5" width="3.5" height="3" fill="#1a2a8a"/></svg>
<svg style="left:99px;top:556.8px" width="10" height="10" viewBox="0 0 10 10"><circle cx="5" cy="5" r="4.2" fill="#e88010"/><path d="M2 8 L8 2" stroke="#402000" stroke-width="2"/><circle cx="6.5" cy="3" r="1.4" fill="#f8d040"/></svg>
<svg style="left:111.5px;top:556.8px" width="10" height="10" viewBox="0 0 10 10"><path d="M1.5 2 H5 V9 H1.5Z M5.5 1 H8.5 V8 H5.5Z" fill="#0a1a5a"/><path d="M2.5 4 L4 3 M6.3 3 L7.6 2.2" stroke="#a0c8f0" stroke-width="1.2"/></svg>
<svg style="left:124px;top:556.8px" width="10" height="10" viewBox="0 0 10 10"><rect x="1" y="2.5" width="6.5" height="7" fill="#08102a"/><rect x="3" y="0.8" width="6" height="5" fill="#182858"/></svg>
<svg style="left:137.6px;top:556.8px" width="10" height="10" viewBox="0 0 10 10"><ellipse cx="5" cy="5.4" rx="4.6" ry="3.8" fill="#3a80e0"/><path d="M1 7 Q5 2 9.5 3" stroke="#a0d0ff" stroke-width="1.2" fill="none"/></svg>
<svg style="left:150px;top:556.8px" width="10" height="10" viewBox="0 0 10 10"><rect x="0.5" y="2" width="9" height="7.5" fill="#f8f8f0" stroke="#101030" stroke-width="1"/><path d="M2.5 5.5 H7 M5 3.5 L7.2 5.5 L5 7.5" stroke="#c8a010" stroke-width="1.3" fill="none"/></svg>
<div style="left:190.5px;top:556px;width:1px;height:14px;background:#8a877f;"></div>
<div style="left:191.5px;top:556px;width:1px;height:14px;background:#fbfaf6;"></div>
<div style="left:193.5px;top:555px;width:61.5px;height:15.6px;background:#e2dfd7;box-shadow:inset 1px 1px 0 #fff, inset -1px -1px 0 #33312c;"></div>
<svg style="left:196.7px;top:557.5px" width="11.5" height="11.5" viewBox="0 0 10 10"><rect x="0.5" y="1" width="9" height="8" fill="#3a78d0"/><rect x="3" y="3" width="6" height="5" fill="#e8f0ff"/><path d="M1 2 L4 5" stroke="#e8f0ff" stroke-width="1.2"/></svg>
<span class="t" style="left:209.9px;top:558.32px;font-size:7.98px;line-height:10.37px;height:10.37px;color:#000;text-shadow:0 0 0.5px rgba(0,0,0,0.5);letter-spacing:-0.143px;">Inbox - Ou...</span>
<div style="left:256.5px;top:555px;width:61.5px;height:15.6px;background:#e2dfd7;box-shadow:inset 1px 1px 0 #fff, inset -1px -1px 0 #33312c;"></div>
<svg style="left:259.7px;top:557.5px" width="11.5" height="11.5" viewBox="0 0 10 10"><circle cx="3.5" cy="3.5" r="3" fill="#1838b0"/><path d="M2 9 L8 2.5" stroke="#d02020" stroke-width="1.6"/><circle cx="4" cy="7.8" r="2" fill="none" stroke="#205020" stroke-width="1"/></svg>
<span class="t" style="left:272.9px;top:558.32px;font-size:7.98px;line-height:10.37px;height:10.37px;color:#000;text-shadow:0 0 0.5px rgba(0,0,0,0.5);letter-spacing:-0.037px;">Trend Micr...</span>
<div style="left:319.5px;top:555px;width:61px;height:15.6px;background:#e2dfd7;box-shadow:inset 1px 1px 0 #fff, inset -1px -1px 0 #33312c;"></div>
<svg style="left:322.7px;top:557.5px" width="11.5" height="11.5" viewBox="0 0 10 10"><rect x="1" y="0.5" width="7.5" height="9" fill="#fff" stroke="#555" stroke-width="0.8"/><circle cx="4.6" cy="5.4" r="2.6" fill="#2868d8"/></svg>
<span class="t" style="left:335.9px;top:558.32px;font-size:7.98px;line-height:10.37px;height:10.37px;color:#000;text-shadow:0 0 0.5px rgba(0,0,0,0.5);letter-spacing:-0.036px;">Yahoo! Gr...</span>
<div style="left:382px;top:555px;width:61.5px;height:15.6px;background:#fcfbf9;box-shadow:inset 1px 1px 0 #33312c, inset -1px -1px 0 #fff;"></div>
<svg style="left:385.2px;top:557.5px" width="11.5" height="11.5" viewBox="0 0 10 10"><path d="M0.6 4 Q0.8 0.8 4.5 1 Q8.4 0.5 9 3.6 L8.8 6.5 L3 8 Q0.4 7 0.6 4Z" fill="#b00c0c"/><path d="M1.5 3 Q4 1.5 7.5 2.6 L7 4.5 Q4 3.5 2 5Z" fill="#5a0000"/><rect x="5.2" y="5" width="4.4" height="4.8" rx="1" fill="#fff" stroke="#800" stroke-width="0.7"/><path d="M7.4 6 V9" stroke="#c02020" stroke-width="1.2"/></svg>
<span class="t" style="left:398.4px;top:558.32px;font-size:7.98px;line-height:10.37px;height:10.37px;color:#000;font-weight:bold;text-shadow:0 0 0.5px rgba(0,0,0,0.5);letter-spacing:-0.202px;">Jasc Pain...</span>
<div style="left:444.5px;top:555px;width:61.5px;height:15.6px;background:#e2dfd7;box-shadow:inset 1px 1px 0 #fff, inset -1px -1px 0 #33312c;"></div>
<svg style="left:447.7px;top:557.5px" width="11.5" height="11.5" viewBox="0 0 10 10"><path d="M0.6 4 Q0.8 0.8 4.5 1 Q8.4 0.5 9 3.6 L8.8 6.5 L3 8 Q0.4 7 0.6 4Z" fill="#b00c0c"/><path d="M1.5 3 Q4 1.5 7.5 2.6 L7 4.5 Q4 3.5 2 5Z" fill="#5a0000"/><rect x="5.2" y="5" width="4.4" height="4.8" rx="1" fill="#fff" stroke="#800" stroke-width="0.7"/><path d="M7.4 6 V9" stroke="#c02020" stroke-width="1.2"/></svg>
<span class="t" style="left:460.9px;top:558.32px;font-size:7.98px;line-height:10.37px;height:10.37px;color:#000;text-shadow:0 0 0.5px rgba(0,0,0,0.5);letter-spacing:-0.223px;">Jasc Paint ...</span>
<div style="left:572.5px;top:555.5px;width:141.5px;height:15px;background:#d9d6ce;box-shadow:inset 1px 1px 0 #aaa79f, inset -1px -1px 0 #fff;"></div>
<svg style="left:575.0px;top:557.5px" width="11" height="11" viewBox="0 0 11 11"><path d="M1 7 L8 4 L10.5 7.5 L3.5 10.5Z" fill="#d8d8e0" stroke="#101018" stroke-width="0.9"/><path d="M2 3 Q5 0 9 2 L6 5Z" fill="#20a030"/></svg>
<svg style="left:587.0px;top:557.5px" width="11" height="11" viewBox="0 0 11 11"><path d="M5.5 0.5 V10.5 M1.5 4 L5.5 6 L9.5 4" stroke="#000" stroke-width="1.3" fill="none"/><circle cx="5.5" cy="5" r="2" fill="#e8c010"/></svg>
<svg style="left:601.3px;top:557.5px" width="11" height="11" viewBox="0 0 11 11"><rect x="0" y="0" width="11" height="11" fill="#0808d8"/><path d="M3 2.5 L8.5 5.5 L3 8.5Z" fill="#fff"/></svg>
<svg style="left:614.5px;top:557.5px" width="11" height="11" viewBox="0 0 11 11"><rect x="1" y="0.5" width="8.5" height="10" fill="#f0e840"/><circle cx="6" cy="6.5" r="2.2" fill="#2858c8"/><rect x="2" y="2" width="3" height="3" fill="#8a6a10"/></svg>
<svg style="left:627.0px;top:557.5px" width="11" height="11" viewBox="0 0 11 11"><path d="M1 3.5 H10 L7 7 V9.5 H9 V10.5 H2 V9.5 H4 V7Z" fill="#0a0a0a"/><ellipse cx="5.5" cy="3" rx="3.6" ry="2" fill="#18b828"/></svg>
<svg style="left:639.5px;top:557.5px" width="11" height="11" viewBox="0 0 11 11"><circle cx="3.6" cy="4" r="3" fill="#1a2a8a"/><path d="M5 1 L8 5 L6 6 L9.5 10" stroke="#e02020" stroke-width="1.6" fill="none"/><circle cx="7" cy="8" r="1.8" fill="#2a3a9a"/></svg>
<svg style="left:652.0px;top:557.5px" width="11" height="11" viewBox="0 0 11 11"><circle cx="5.5" cy="5.5" r="4.6" fill="#1a3a7a"/><path d="M2.5 4 Q5.5 1.5 8.5 4.5 Q6 8 3 7Z" fill="#6a9ad8"/></svg>
<span class="t" style="left:674.5px;top:557.95px;font-size:7.77px;line-height:10.1px;height:10.1px;color:#000;text-shadow:0 0 0.5px rgba(0,0,0,0.5);letter-spacing:-0.132px;">5:00 PM</span>
</div>
</body>
</html>
